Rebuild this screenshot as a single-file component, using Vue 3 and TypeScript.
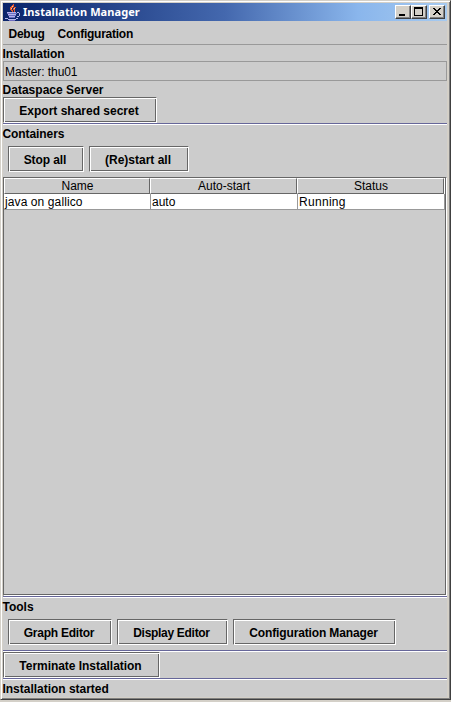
<script setup lang="ts">
interface Action { label: string; width: number; spacing: number }
interface Row { name: string; autoStart: string; status: string }

const menus: string[] = ['Debug', 'Configuration']
const containerActions: Action[] = [
  { label: 'Stop all', width: 76, spacing: -0.08 },
  { label: '(Re)start all', width: 100, spacing: 0 },
]
const toolActions: Action[] = [
  { label: 'Graph Editor', width: 104, spacing: -0.24 },
  { label: 'Display Editor', width: 111, spacing: -0.3 },
  { label: 'Configuration Manager', width: 163, spacing: -0.14 },
]
const columns: string[] = ['Name', 'Auto-start', 'Status']
const rows: Row[] = [{ name: 'java on gallico', autoStart: 'auto', status: 'Running' }]
</script>

<template>
  <div class="window">
    <header class="titlebar">
      <svg class="cup" width="16" height="17" viewBox="0 0 16 17" shape-rendering="crispEdges">
        <path fill="#e8582c" d="M8 0h1v1h-1zM7 1h2v1h-2zM6 2h3v1h-3zM5 3h3v1h-3zM5 4h2v2h-2zM6 6h2v1h-2zM7 7h1v1h-1zM9 3h2v1h-2zM8 4h2v2h-2zM9 6h1v2h-1z" />
        <path fill="#f8c0a0" d="M7 2h1v1h-1zM6 4h1v1h-1zM9 4h1v1h-1z" />
        <path fill="#b4b4ec" d="M2 8h9v1h-9zM12 8h2v1h-2zM3 10h8v1h-8zM14 9h1v3h-1zM12 12h2v1h-2zM4 12h6v1h-6zM0 14h3v1h-3zM11 14h2v1h-2zM3 15h8v1h-8z" />
        <path fill="#6c6cc0" d="M2 9h10v1h-10zM3 11h8v1h-8zM4 13h6v1h-6zM4 16h6v1h-6z" />
      </svg>
      <h1>Installation Manager</h1>
      <div class="controls">
        <button type="button" aria-label="Minimize">
          <svg width="14" height="12" shape-rendering="crispEdges"><path d="M3 8h6v2h-6z" /></svg>
        </button>
        <button type="button" aria-label="Maximize">
          <svg width="14" height="12" shape-rendering="crispEdges"><path fill-rule="evenodd" d="M2 1h9v9h-9zM3 3h7v6h-7z" /></svg>
        </button>
        <button type="button" class="close" aria-label="Close">
          <svg width="14" height="12" shape-rendering="crispEdges"><path d="M3 2h2v1h1v1h2v-1h1v-1h2v1h-1v1h-1v1h-1v1h1v1h1v1h1v1h-2v-1h-1v-1h-2v1h-1v1h-2v-1h1v-1h1v-1h1v-1h-1v-1h-1v-1h-1z" /></svg>
        </button>
      </div>
    </header>

    <nav class="menubar"><span v-for="m in menus" :key="m">{{ m }}</span></nav>

    <main>
      <h2 class="installation">Installation</h2>
      <div class="field">Master: thu01</div>
      <h2 class="dataspace">Dataspace Server</h2>
      <button type="button" class="btn export">Export shared secret</button>
      <hr />
      <h2 class="containers">Containers</h2>
      <div class="actions">
        <button v-for="a in containerActions" :key="a.label" type="button" class="btn" :style="{ width: a.width + 'px', letterSpacing: a.spacing + 'px' }">{{ a.label }}</button>
      </div>
      <div class="scrollpane">
        <div class="row head"><span v-for="c in columns" :key="c">{{ c }}</span></div>
        <div v-for="r in rows" :key="r.name" class="row data">
          <span class="name">{{ r.name }}</span><span>{{ r.autoStart }}</span><span class="status">{{ r.status }}</span>
        </div>
      </div>
      <hr />
      <h2 class="tools">Tools</h2>
      <div class="actions">
        <button v-for="a in toolActions" :key="a.label" type="button" class="btn" :style="{ width: a.width + 'px', letterSpacing: a.spacing + 'px' }">{{ a.label }}</button>
      </div>
      <hr />
      <button type="button" class="btn terminate">Terminate Installation</button>
      <hr />
      <footer>Installation started</footer>
    </main>
  </div>
</template>

<style>
body { background: #d4d0c8; overflow: hidden; }
</style>

<style scoped>
* { box-sizing: border-box; }
.window {
  width: 451px;
  height: 700px;
  padding: 2px 2px 1px 2px;
  border: 1px solid #d4d0c8;
  border-right-color: #404040;
  border-bottom-color: #404040;
  background: #d4d0c8;
  box-shadow: inset 1px 1px #fff, inset -1px -1px #808080, 0 1px #a8a8a4;
  font: 12px/14px "Liberation Sans", Arial, sans-serif;
  color: #000;
}
.titlebar {
  display: flex;
  align-items: center;
  width: 444px;
  height: 18px;
  padding-left: 2px;
  background: linear-gradient(90deg, #0a246a, #4468ae 50%, #8ab6ec 80%, #a6caf0);
}
.cup { flex: none; }
h1 {
  margin: 0 0 0 2px;
  color: #fff;
  font: bold 11px/16px "Noto Sans", sans-serif;
  letter-spacing: 0.06px;
  white-space: nowrap;
}
.controls { display: flex; margin-left: auto; padding-right: 2px; }
.controls button {
  width: 16px;
  height: 14px;
  padding: 0;
  border: 1px solid;
  border-color: #fff #404040 #404040 #fff;
  background: #d4d0c8;
  box-shadow: inset -1px -1px #808080;
  line-height: 0;
}
.controls svg { display: block; }
.controls .close { margin-left: 2px; }
.menubar {
  display: flex;
  gap: 13px;
  width: 444px;
  height: 24px;
  padding: 6px 0 0 5.5px;
  border-bottom: 1px solid #999;
  background: #ccc;
  font-weight: bold;
  letter-spacing: -0.25px;
}
main {
  display: flex;
  flex-direction: column;
  width: 444px;
  height: 652px;
  background: #ccc;
}
h2, footer { margin: 0 0 0 -0.5px; font: bold 12px/14px "Liberation Sans", Arial, sans-serif; }
.installation { height: 16px; padding-top: 2px; letter-spacing: -0.12px; }
.field { height: 20px; padding: 3px 1px 0; border: 1px solid #999; letter-spacing: -0.07px; }
.dataspace { height: 16px; padding-top: 2px; letter-spacing: 0.02px; }
.btn {
  height: 26px;
  padding: 1px 2px 0 0;
  border: 1px solid #666;
  border-right-color: #fff;
  border-bottom-color: #fff;
  border-radius: 0;
  background: #ccc;
  box-shadow: inset 1px 1px #fff, inset -1px -1px #666;
  color: #000;
  font: bold 12px/14px "Liberation Sans", Arial, sans-serif;
  white-space: nowrap;
}
.export { width: 154px; }
.terminate { width: 157px; letter-spacing: -0.04px; }
hr { flex: none; width: 100%; height: 2px; margin: 0; border: 0; border-top: 1px solid #669; border-bottom: 1px solid #fff; }
.containers { height: 21px; padding-top: 2px; letter-spacing: -0.08px; }
.actions { display: flex; gap: 5px; height: 31px; padding-left: 5px; }
.scrollpane {
  height: 419px;
  width: 444px;
  border: 1px solid #666;
  border-right-color: #fff;
  border-bottom-color: #fff;
  box-shadow: inset -1px -1px #666;
}
.row { display: grid; width: 440px; grid-template-columns: 146px 147px 147px; }
.row span { white-space: nowrap; }
.head { box-shadow: 1px 0 #fff; }
.head span {
  height: 16px;
  padding-left: 1px;
  border: 1px solid #fff;
  border-right-color: #666;
  border-bottom-color: #666;
  text-align: center;
  line-height: 15px;
}
.data { width: 441px; grid-template-columns: 147px 147px 147px; }
.data span {
  height: 16px;
  padding-left: 1px;
  border-right: 1px solid #999;
  border-bottom: 1px solid #999;
  background: #fff;
  line-height: 16px;
}
.data .name { letter-spacing: 0.1px; }
.data .status { letter-spacing: 0.3px; }
.tools { height: 21px; padding-top: 2px; }
footer { height: 17px; padding-top: 2px; letter-spacing: -0.02px; }
</style>
